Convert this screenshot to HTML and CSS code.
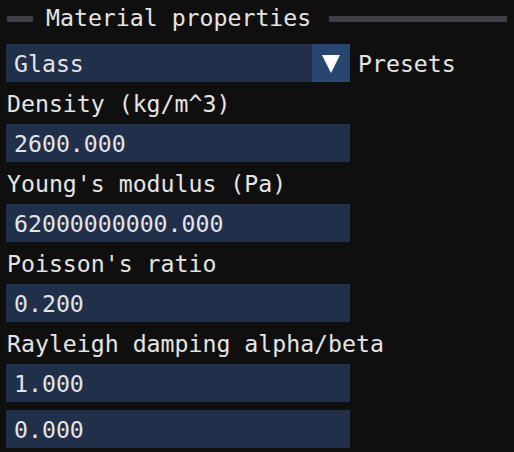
FILE: index.html
```html
<!DOCTYPE html>
<html>
<head>
<meta charset="utf-8">
<link rel="stylesheet" href="styles.css">
</head>
<body>
<div class="panel">
  <div class="sep">
    <div class="sep-line sep-left"></div>
    <div class="sep-text">Material properties</div>
    <div class="sep-line sep-right"></div>
  </div>
  <div class="row">
    <div class="combo">
      <div class="combo-value">Glass</div>
      <div class="combo-btn">
        <svg width="18" height="18" viewBox="0 0 18 18"><polygon points="0,0 18,0 9,18" fill="#ffffff"/></svg>
      </div>
    </div>
    <div class="side-label">Presets</div>
  </div>
  <div class="label">Density (kg/m^3)</div>
  <div class="field">2600.000</div>
  <div class="label">Young's modulus (Pa)</div>
  <div class="field">62000000000.000</div>
  <div class="label">Poisson's ratio</div>
  <div class="field">0.200</div>
  <div class="label">Rayleigh damping alpha/beta</div>
  <div class="field">1.000</div>
  <div class="field">0.000</div>
</div>
</body>
</html>
```
FILE: styles.css
```css
html, body {
  margin: 0;
  padding: 0;
  background: #0f0f0f;
}
body {
  width: 514px;
  height: 452px;
  overflow: hidden;
  font-family: "DejaVu Sans Mono", "Liberation Mono", monospace;
  font-size: 23.2px;
  line-height: 26px;
  color: #e4e4e4;
}
.panel {
  display: flex;
  flex-direction: column;
  gap: 8px;
  padding: 0 7px 0 6px;
}
.sep {
  display: flex;
  align-items: flex-start;
  height: 26px;
  margin-top: 4px;
  margin-bottom: 6px;
}
.sep-text {
  white-space: pre;
  margin-left: 1px;
  padding-top: 1px;
}
.sep-line {
  height: 6px;
  margin-top: 12px;
  background: #3e3e47;
}
.sep-left {
  width: 26px;
  margin-left: 1px;
  margin-right: 12px;
}
.sep-right {
  flex: 1;
  margin-left: 18px;
}
.row {
  display: flex;
  align-items: center;
  gap: 8px;
}
.combo {
  display: flex;
  width: 344px;
  height: 38px;
  background: #20304a;
}
.combo-value {
  flex: 1;
  padding: 7px 8px 5px;
  white-space: pre;
}
.combo-btn {
  width: 38px;
  height: 38px;
  background: #29476e;
  display: flex;
  align-items: center;
  justify-content: center;
}
.combo-btn svg {
  display: block;
  margin-top: 2px;
}
.side-label {
  white-space: pre;
  padding-top: 2px;
}
.label {
  white-space: pre;
  height: 25px;
  padding: 1px 0 0 1px;
}
.field {
  width: 328px;
  height: 26px;
  padding: 7px 8px 5px;
  background: #20304a;
  white-space: pre;
}
```
